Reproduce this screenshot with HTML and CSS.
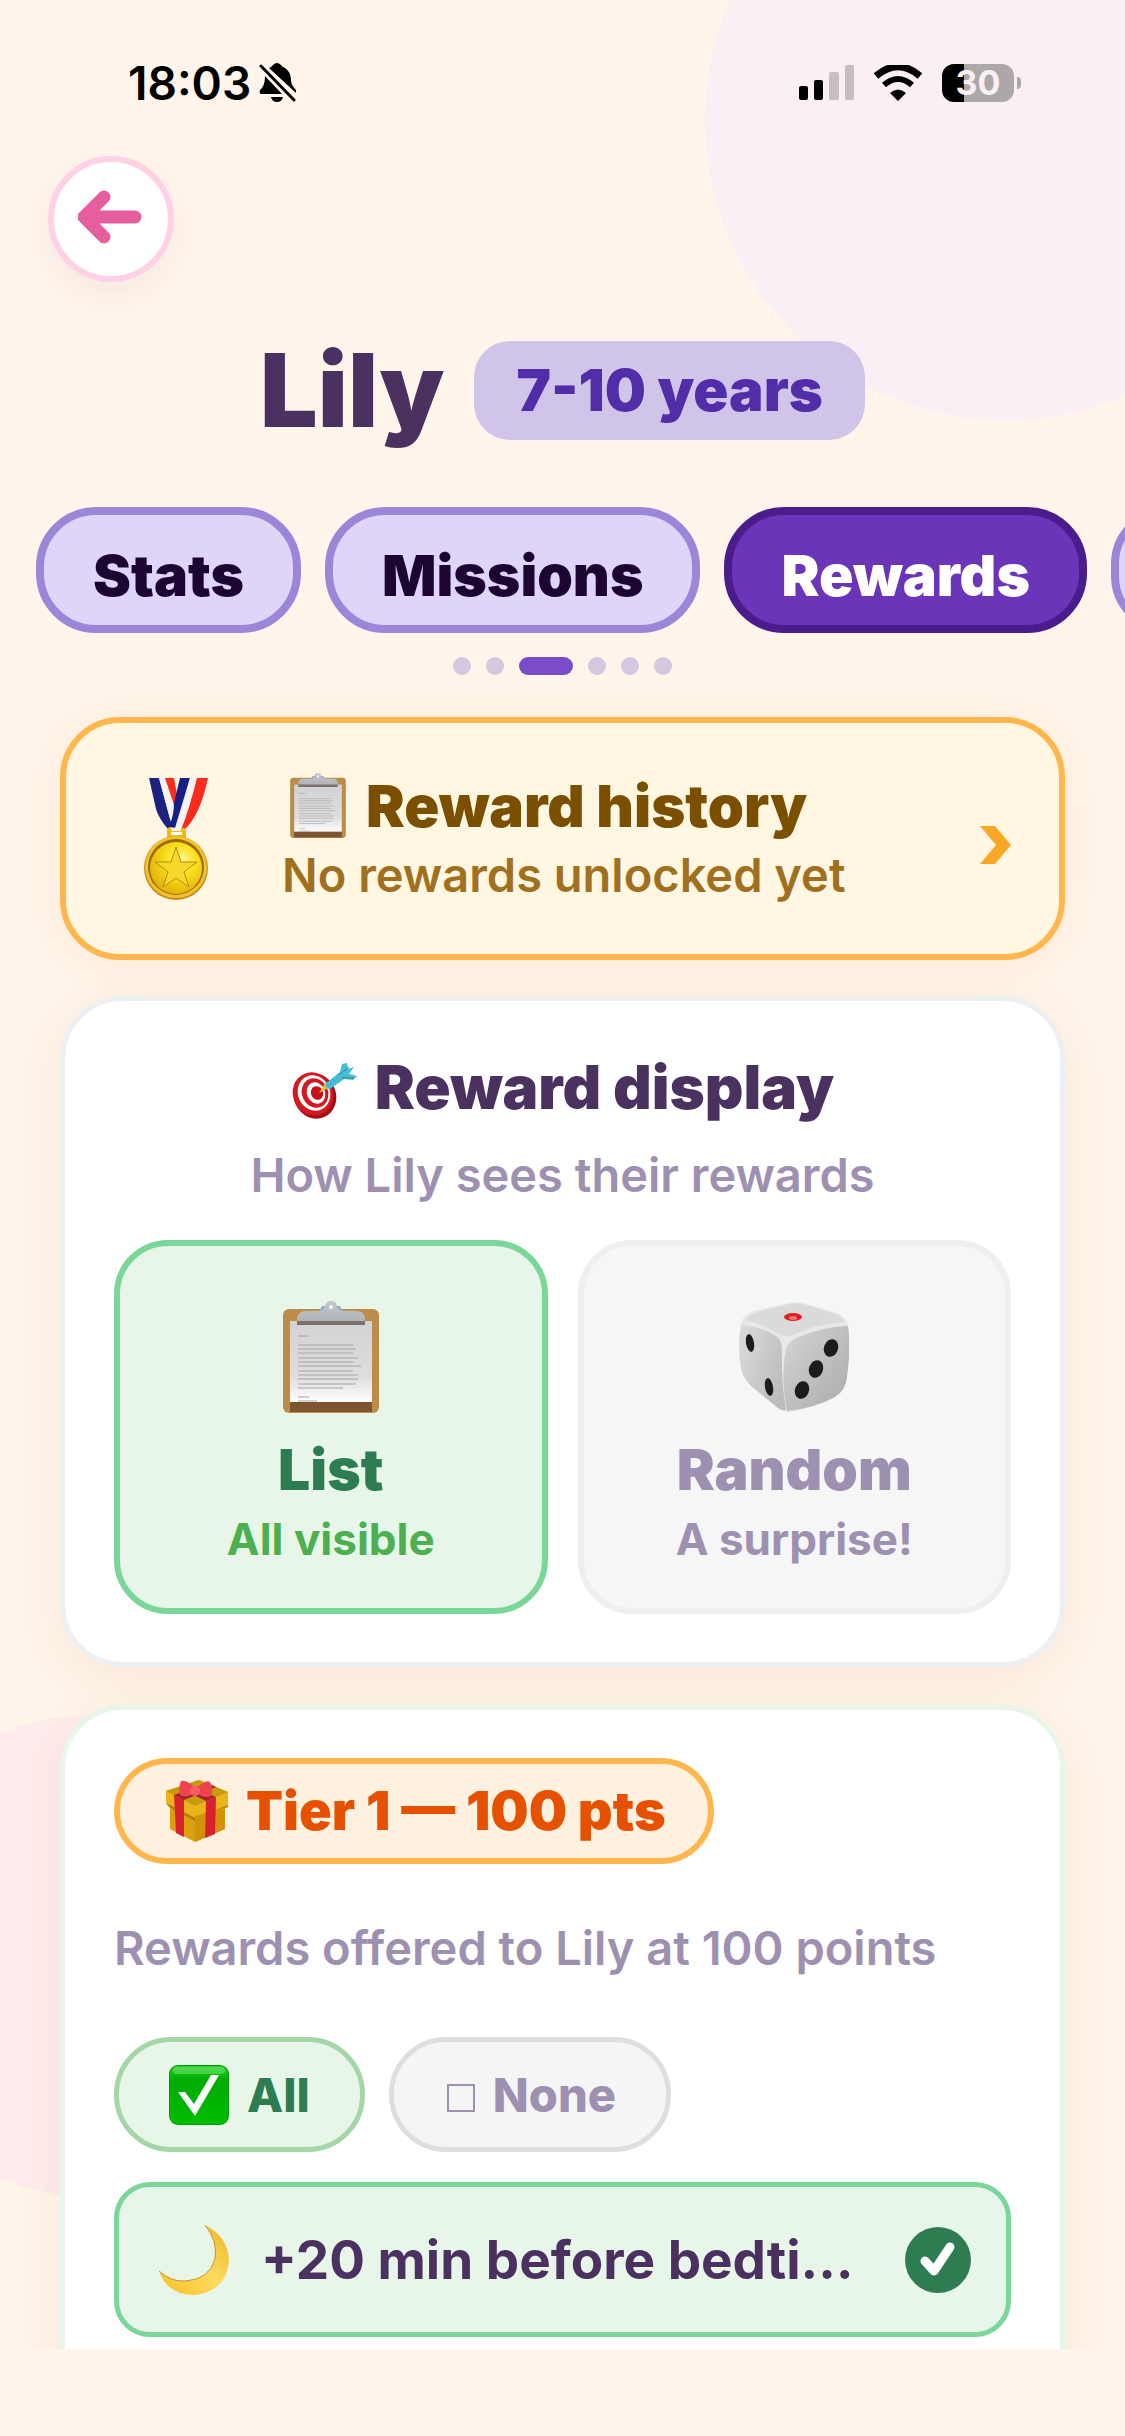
FILE: index.html
```html
<!DOCTYPE html>
<html lang="en">

<head>
    <meta charset="utf-8">
    <title>Lily - Rewards</title>
    <meta name="viewport" content="width=device-width, initial-scale=1">
    <link rel="stylesheet" href="styles.css">
</head>

<body>
    <!-- shared emoji drawings -->
    <svg class="defs" width="0" height="0" aria-hidden="true">
        <defs>
            <linearGradient id="paper" x1="0" y1="0" x2="0" y2="1">
                <stop offset="0" stop-color="#d2d2d4" />
                <stop offset="0.7" stop-color="#dededf" />
                <stop offset="1" stop-color="#ffffff" />
            </linearGradient>
            <linearGradient id="clip" x1="0" y1="0" x2="0" y2="1">
                <stop offset="0" stop-color="#c3c8cd" />
                <stop offset="1" stop-color="#aeb1b6" />
            </linearGradient>
            <symbol id="clipboard" viewBox="0 0 96 112">
                <rect x="0" y="8" width="96" height="104" rx="6" fill="#bd8c4a" />
                <rect x="7" y="100" width="82" height="11" fill="#7d5530" />
                <rect x="7" y="20" width="82" height="81" fill="url(#paper)" />
                <path d="M34 10q4-1 5-5h18q1 4 5 5z" fill="#8ea9cf" />
                <path d="M14 23v-6q1-7 9-7h14q4-1 5-5q1-5 6-5t6 5q1 4 5 5h14q8 0 9 7v6z" fill="url(#clip)" />
                <path d="M14 20h68v4H14z" fill="#7c726b" />
                <circle cx="48" cy="6" r="2" fill="#f5f5f5" />
                <path d="M15 35h11M15 44h55M15 48h58M15 52h55M15 57h60M15 61h56M15 65h63M15 70h55M15 74h60M15 78h60M15 83h58M15 87h45M15 96h11M15 100h19"
                    stroke="#a4a4a6" stroke-width="1" />
            </symbol>
        </defs>
    </svg>

    <div class="bubble bubble-purple"></div>
    <div class="bubble bubble-pink"></div>

    <div class="statusbar">
        <span class="time">18:03</span>
        <svg class="bell" viewBox="0 0 37 40">
            <path d="M10 5q3-1 4-3q2-2 4-2t4 2q1 2 4 3q6 4 6 12q0 5 5 10v3zM6 13l17 18H2q-2-1-1-4q5-4 5-14z" />
            <path d="M12 34h12q-1 5-6 5t-6-5z" />
            <path d="M2 3l33 34" stroke="#000" stroke-width="3" stroke-linecap="round" />
        </svg>
        <span class="spacer"></span>
        <svg class="signal" viewBox="0 0 56 36">
            <rect x="0" y="21" width="9" height="14" rx="2" />
            <rect x="15" y="15" width="9" height="20" rx="2" />
            <rect x="30" y="7" width="10" height="28" rx="2" fill="#c5bfc2" />
            <rect x="46" y="0" width="9" height="35" rx="2" fill="#c5bfc2" />
        </svg>
        <svg class="wifi" viewBox="0 0 50 36">
            <path d="M3 11Q25-8 47 11" fill="none" stroke="#000" stroke-width="7" />
            <path d="M11 20Q25 8 39 20" fill="none" stroke="#000" stroke-width="6" />
            <path d="M17 28Q25 21 33 28L25 36z" />
        </svg>
        <span class="battery">30</span>
        <span class="battery-cap"></span>
    </div>

    <button class="back" aria-label="Back">
        <svg viewBox="0 0 64 54">
            <path d="M57 27H7M26 7L6 27L26 47" />
        </svg>
    </button>

    <div class="profile">
        <h1>Lily</h1>
        <span class="age">7-10 years</span>
    </div>

    <nav class="tabs">
        <button class="tab">Stats</button>
        <button class="tab">Missions</button>
        <button class="tab active">Rewards</button>
        <button class="tab" aria-label="Next tab"></button>
    </nav>
    <div class="dots">
        <span></span><span></span><span class="on"></span><span></span><span></span><span></span>
    </div>

    <main class="content">
        <button class="history">
            <svg class="medal" viewBox="0 0 64 122">
                <defs>
                    <radialGradient id="gold" cx="0.6" cy="0.35" r="0.7">
                        <stop offset="0" stop-color="#fff9a0" />
                        <stop offset="0.4" stop-color="#fbe11c" />
                        <stop offset="1" stop-color="#dfae08" />
                    </radialGradient>
                </defs>
                <path d="M5 0h10l13 48-4 3q-9-10-12-20z" fill="#1b2280" />
                <path d="M15 0h7l8 27-4 14z" fill="#f4f3f2" />
                <path d="M21 0h9l3 16-3 11z" fill="#fb2b20" />
                <path d="M36 0h10L33 50l-8-1q5-12 5-24z" fill="#171f86" />
                <path d="M46 0h8L40 50h-9z" fill="#f4f3f4" />
                <path d="M53 0h11Q56 38 40 52h-3q8-20 16-52z" fill="#fb2b20" />
                <path d="M23 61v-9q1-4 4-2v3h10v-3q4-1 5 2v9z" fill="#efb71b" />
                <rect x="27" y="54" width="11" height="3" fill="#fff" />
                <circle cx="32" cy="90" r="32" fill="#c98a17" />
                <circle cx="32" cy="89" r="31" fill="#f2c22b" />
                <circle cx="32" cy="89" r="28" fill="#9c6a10" />
                <circle cx="32" cy="90" r="26" fill="url(#gold)" />
                <path d="M32 69l5 15h16L40 94l5 15-13-9-13 9 5-15-13-10h16z" fill="#f6d82c" stroke="#b78a10"
                    stroke-width="1" />
            </svg>
            <span class="history-text">
                <span class="history-title"><svg class="board-small"><use href="#clipboard" /></svg>Reward history</span>
                <span class="history-sub">No rewards unlocked yet</span>
            </span>
            <svg class="chevron" viewBox="0 0 31 38">
                <path d="M0 0H15L31 19L15 38H0L16 19z" />
            </svg>
        </button>

        <section class="card">
            <h2>
                <svg class="dart" viewBox="0 0 66 56">
                    <ellipse cx="24" cy="33" rx="21" ry="23" transform="rotate(-24 24 33)" fill="#9f0d16" />
                    <ellipse cx="22" cy="31" rx="20" ry="22" transform="rotate(-24 22 31)" fill="#d5171f" />
                    <ellipse cx="23" cy="30" rx="16" ry="18" transform="rotate(-24 23 30)" fill="#fff" />
                    <ellipse cx="24" cy="30" rx="13" ry="15" transform="rotate(-24 24 30)" fill="#d5171f" />
                    <ellipse cx="25" cy="30" rx="9" ry="11" transform="rotate(-24 25 30)" fill="#fff" />
                    <ellipse cx="26" cy="30" rx="6" ry="7" transform="rotate(-24 26 30)" fill="#c31019" />
                    <path d="M28 30l7-11 4 5z" fill="#e9c62c" />
                    <path d="M35 20L49 9l2-8 5-1 1 6 6-2-5 7 8 2-4 4-9-1-14 10q-5 0-4-6z" fill="#45bdd6" />
                    <path d="M48 12l10-8M51 15l12 0" stroke="#2489a0" stroke-width="1" />
                </svg>
                Reward display
            </h2>
            <p class="card-sub">How Lily sees their rewards</p>
            <div class="modes">
                <button class="mode selected">
                    <svg class="board-big"><use href="#clipboard" /></svg>
                    <span class="mode-name">List</span>
                    <span class="mode-info">All visible</span>
                </button>
                <button class="mode">
                    <svg class="dice" viewBox="0 0 110 110">
                        <defs>
                            <linearGradient id="left" x1="0" y1="0" x2="1" y2="0.6">
                                <stop offset="0" stop-color="#dcdcdc" />
                                <stop offset="1" stop-color="#bcbcbc" />
                            </linearGradient>
                            <linearGradient id="right" x1="0" y1="0" x2="1" y2="1">
                                <stop offset="0" stop-color="#d4d5d5" />
                                <stop offset="1" stop-color="#a9aaaa" />
                            </linearGradient>
                        </defs>
                        <path d="M2 21Q4 13 14 9L50 1Q58-1 68 2L98 11Q108 15 109 23Q112 46 108 75Q107 88 96 95Q76 106 52 110Q46 111 40 107L12 84Q4 76 2 66Q-2 44 2 21z" fill="#e8e8e8" />
                        <path d="M2 23Q22 24 37 34Q43 38 43 48Q42 78 47 108Q43 109 39 106L12 84Q4 76 2 66Q-2 44 2 23z" fill="url(#left)" />
                        <path d="M109 24Q86 24 57 36Q47 41 46 52Q42 80 48 109Q76 106 96 95Q107 88 108 75Q112 46 109 24z" fill="url(#right)" />
                        <path d="M6 18Q10 12 22 9L50 2Q58 0 68 3L96 12Q104 15 105 20Q74 23 53 33Q45 36 38 31Q24 22 6 18z" fill="#dadada" />
                        <ellipse cx="54" cy="15" rx="9" ry="4" fill="#e01f20" />
                        <ellipse cx="54" cy="16" rx="4" ry="2" fill="#f6716c" />
                        <g fill="#1c1c1c">
                            <ellipse cx="11" cy="41" rx="4" ry="9" transform="rotate(-10 11 41)" />
                            <ellipse cx="30" cy="85" rx="4" ry="9" transform="rotate(-10 30 85)" />
                            <ellipse cx="92" cy="46" rx="7" ry="9" transform="rotate(20 92 46)" />
                            <ellipse cx="77" cy="67" rx="7" ry="9" transform="rotate(20 77 67)" />
                            <ellipse cx="63" cy="88" rx="7" ry="9" transform="rotate(20 63 88)" />
                        </g>
                    </svg>
                    <span class="mode-name">Random</span>
                    <span class="mode-info">A surprise!</span>
                </button>
            </div>
        </section>

        <section class="card tier">
            <div class="tier-badge">
                <svg class="gift" viewBox="0 0 62 62">
                    <path d="M0 11L33 0L62 12V25L59 26V49L29 62L4 49V26L0 22z" fill="#dba010" />
                    <path d="M0 11L33 0L62 12L29 26z" fill="#c99a0c" />
                    <path d="M0 11L29 26V38L0 23zM62 12L29 26V38L62 25z" fill="#eab51a" />
                    <path d="M0 23L29 38L62 25V27L29 41L3 27z" fill="#b27b08" />
                    <path d="M29 36V62L59 49V27z" fill="#d19409" />
                    <path d="M8 15L18 20V57L10 53zM40 21L50 17L49 54L39 58z" fill="#d8202f" />
                    <path d="M8 15L42 3L50 7L18 20zM40 21L50 17L22 5L14 8z" fill="#a5212a" />
                    <path d="M29 8Q20-1 15 1Q12 8 14 15Q20 19 28 13zM31 8Q40-1 44 2Q48 8 45 16Q38 19 31 13z"
                        fill="#ee4450" />
                    <circle cx="29" cy="11" r="5" fill="#f65c64" />
                </svg>
                Tier 1 — 100 pts
            </div>
            <p class="tier-info">Rewards offered to Lily at 100 points</p>
            <div class="picks">
                <button class="pick all">
                    <svg class="tick" viewBox="0 0 60 60">
                        <defs>
                            <linearGradient id="green" x1="0" y1="0" x2="0" y2="1">
                                <stop offset="0" stop-color="#1fd01f" />
                                <stop offset="0.25" stop-color="#00ac00" />
                                <stop offset="1" stop-color="#00bd00" />
                            </linearGradient>
                        </defs>
                        <rect x="0" y="0" width="60" height="60" rx="9" fill="#0a9a12" />
                        <rect x="1" y="1" width="58" height="58" rx="8" fill="url(#green)" />
                        <rect x="4" y="2" width="52" height="7" rx="4" fill="#6be36b" opacity="0.6" />
                        <path d="M9 27H16L25 39L42 10H50L26 51z" fill="#fff" />
                    </svg>
                    All
                </button>
                <button class="pick none"><span class="square"></span>None</button>
            </div>
            <label class="reward" for="bedtime">
                <svg class="moon" viewBox="0 0 70 70">
                    <defs>
                        <linearGradient id="moonfill" x1="0" y1="1" x2="1" y2="0">
                            <stop offset="0" stop-color="#fbbc24" />
                            <stop offset="0.5" stop-color="#fbdc5e" />
                            <stop offset="1" stop-color="#efb52c" />
                        </linearGradient>
                    </defs>
                    <path d="M46 0Q70 12 70 37Q67 66 36 70Q8 70 0 46Q12 57 26 56Q50 55 56 34Q59 16 46 0z"
                        fill="url(#moonfill)" />
                    <path d="M0 46Q12 57 26 56Q50 55 56 34Q59 16 46 0" fill="none" stroke="#c8922a"
                        stroke-width="1" />
                </svg>
                <span class="reward-name">+20 min before bedti…</span>
                <span class="check">
                    <input type="checkbox" id="bedtime" checked>
                    <svg viewBox="0 0 66 66">
                        <path d="M20 34L29 44L45 20" />
                    </svg>
                </span>
            </label>
        </section>
    </main>
</body>

</html>
```
FILE: styles.css
```css
* {
    box-sizing: border-box;
}

body {
    margin: 0;
    height: 100vh;
    display: flex;
    flex-direction: column;
    position: relative;
    overflow: hidden;
    padding-bottom: 87px;
    background: #fff5eb;
    color: #4a3160;
    font-family: Inter, "Liberation Sans", sans-serif;
}

button {
    font-family: inherit;
    cursor: pointer;
}

h1,
h2,
p {
    margin: 0;
}

svg {
    display: block;
    flex: none;
}

.defs {
    position: absolute;
}

/* background circles */
.bubble {
    position: absolute;
    z-index: -1;
    border-radius: 50%;
}

.bubble-purple {
    width: 600px;
    height: 600px;
    top: -180px;
    right: -180px;
    background: #f9eff5;
}

.bubble-pink {
    width: 480px;
    height: 480px;
    left: -150px;
    bottom: 240px;
    background: #ffebec;
}

/* status bar */
.statusbar {
    display: flex;
    align-items: center;
    flex: none;
    height: 112px;
    padding: 54px 104px 0 128px;
    color: #000;
}

.time {
    font-size: 46px;
    font-weight: 600;
    line-height: 58px;
}

.bell {
    width: 37px;
    height: 40px;
    margin-left: 8px;
}

.spacer {
    flex: 1;
}

.signal {
    width: 56px;
    height: 36px;
}

.wifi {
    width: 50px;
    height: 36px;
    margin-left: 18px;
}

.battery {
    width: 72px;
    height: 38px;
    margin-left: 19px;
    border-radius: 12px;
    background: linear-gradient(to right, #000 30%, #aca8aa 30%);
    color: #f9eff5;
    font-size: 34px;
    font-weight: 700;
    line-height: 38px;
    text-align: center;
}

.battery-cap {
    width: 4px;
    height: 12px;
    margin-left: 3px;
    border-radius: 0 6px 6px 0;
    background: #aca8aa;
}

/* header */
.back {
    display: flex;
    align-items: center;
    justify-content: center;
    flex: none;
    width: 126px;
    height: 126px;
    margin: 44px 0 0 48px;
    padding: 0 2px 4px 0;
    border: 6px solid #ffd1e6;
    border-radius: 50%;
    background: #fff;
    box-shadow: 0 12px 30px rgba(74, 49, 96, 0.06);
}

.back svg {
    width: 64px;
    height: 54px;
    fill: none;
    stroke: #e55f9f;
    stroke-width: 13;
    stroke-linecap: round;
    stroke-linejoin: round;
}

.profile {
    display: flex;
    align-items: center;
    justify-content: center;
    gap: 30px;
    margin-top: 48px;
}

h1 {
    font-size: 102px;
    font-weight: 900;
    line-height: 120px;
}

.age {
    padding: 16px 42px;
    border-radius: 36px;
    background: #d1c4e9;
    color: #512da8;
    font-size: 58px;
    font-weight: 900;
    line-height: 67px;
}

.tabs {
    display: flex;
    flex: none;
    gap: 24px;
    margin-top: 57px;
    padding-left: 36px;
    overflow: hidden;
}

.tab {
    flex: none;
    height: 126px;
    padding: 11px 49px 0;
    border: 8px solid #9b86d8;
    border-radius: 60px;
    background: #ded5f9;
    color: #1c0533;
    font-size: 57px;
    font-weight: 900;
}

.tab.active {
    border-color: #4a1c8c;
    background: #6a35b8;
    color: #fff;
}

.dots {
    display: flex;
    justify-content: center;
    gap: 15px;
    margin-top: 24px;
}

.dots span {
    width: 18px;
    height: 18px;
    border-radius: 9px;
    background: #d3c8df;
}

.dots .on {
    width: 54px;
    background: #7a4cc9;
}

/* scrolling part */
.content {
    flex: 1;
    min-height: 0;
    overflow: hidden;
    display: flex;
    flex-direction: column;
    gap: 36px;
    padding: 42px 60px 0;
}

.history {
    display: flex;
    align-items: center;
    flex: none;
    height: 243px;
    padding: 0 48px 0 78px;
    border: 6px solid #ffb74d;
    border-radius: 60px;
    background: #fff7e1;
    text-align: left;
    box-shadow: 0 6px 42px rgba(255, 150, 50, 0.12);
}

.medal {
    width: 64px;
    height: 122px;
}

.history-text {
    flex: 1;
    display: flex;
    flex-direction: column;
    margin-left: 74px;
}

.history-title {
    display: flex;
    align-items: center;
    gap: 20px;
    padding-left: 8px;
    color: #7a4f00;
    font-size: 58px;
    font-weight: 900;
    line-height: 72px;
    white-space: nowrap;
}

.board-small {
    width: 56px;
    height: 65px;
}

.history-sub {
    color: #a07020;
    font-size: 47px;
    font-weight: 600;
    line-height: 66px;
}

.chevron {
    width: 31px;
    height: 38px;
    margin-top: 12px;
    fill: #f9a825;
}

.card {
    flex: none;
    padding: 48px 49px;
    border: 5px solid #eeeff0;
    border-radius: 63px;
    background: #fff;
    box-shadow: 0 12px 48px rgba(190, 110, 50, 0.1);
}

h2 {
    display: flex;
    align-items: center;
    justify-content: center;
    gap: 18px;
    font-size: 60px;
    font-weight: 900;
    line-height: 76px;
}

.dart {
    width: 66px;
    height: 56px;
    margin-top: 8px;
}

.card-sub {
    margin-top: 20px;
    color: #9e90b0;
    font-size: 47px;
    font-weight: 600;
    line-height: 60px;
    text-align: center;
}

.modes {
    display: grid;
    grid-template-columns: 1fr 1fr;
    gap: 30px;
    margin-top: 35px;
}

.mode {
    display: flex;
    flex-direction: column;
    align-items: center;
    height: 374px;
    padding: 55px 0 0;
    border: 6px solid #efefef;
    border-radius: 54px;
    background: #f6f6f6;
    color: #9e90b0;
}

.mode.selected {
    border-color: #7bd699;
    background: #e8f5e9;
    color: #2e7d52;
}

.board-big {
    width: 96px;
    height: 112px;
}

.dice {
    width: 110px;
    height: 112px;
}

.mode-name {
    margin-top: 24px;
    font-size: 57px;
    font-weight: 900;
    line-height: 66px;
}

.mode-info {
    margin-top: 8px;
    font-size: 44px;
    font-weight: 700;
    line-height: 56px;
}

.selected .mode-info {
    color: #4caf50;
}

/* tier */
.tier {
    margin-top: 2px;
    padding-bottom: 150px;
    border-color: #e8f5e9;
}

.tier-badge {
    display: flex;
    align-items: center;
    gap: 18px;
    width: fit-content;
    padding: 0 42px 0 46px;
    border: 6px solid #ffb74d;
    border-radius: 53px;
    background: #fff1e0;
    color: #e65100;
    font-size: 54px;
    font-weight: 900;
    line-height: 94px;
}

.gift {
    width: 62px;
    height: 62px;
}

.tier-info {
    margin-top: 54px;
    color: #9e90b0;
    font-size: 47px;
    font-weight: 600;
    line-height: 60px;
    white-space: nowrap;
}

.picks {
    display: flex;
    gap: 24px;
    margin-top: 59px;
}

.pick {
    display: flex;
    align-items: center;
    gap: 18px;
    height: 115px;
    padding: 0 50px;
    border: 5px solid #a5d6a7;
    border-radius: 57px;
    background: #e8f5e9;
    color: #2e7d52;
    font-size: 47px;
    font-weight: 800;
}

.pick.none {
    padding-left: 53px;
    border-color: #dedede;
    background: #f5f5f5;
    color: #9e90b0;
}

.tick {
    width: 60px;
    height: 60px;
}

.square {
    width: 28px;
    height: 28px;
    margin-top: 6px;
    border: 2px solid #9e90b0;
}

.reward {
    display: flex;
    align-items: center;
    height: 155px;
    margin-top: 30px;
    padding: 0 35px 0 40px;
    border: 5px solid #7bd699;
    border-radius: 36px;
    background: #e8f5e9;
}

.moon {
    width: 70px;
    height: 70px;
}

.reward-name {
    flex: 1;
    margin-left: 32px;
    font-size: 53px;
    font-weight: 700;
    white-space: nowrap;
}

.check {
    display: grid;
    width: 66px;
    height: 66px;
}

.check input,
.check svg {
    grid-area: 1 / 1;
    width: 66px;
    height: 66px;
    margin: 0;
}

.check input {
    appearance: none;
    border-radius: 50%;
    background: #2e7d52;
}

.check svg {
    z-index: 1;
    pointer-events: none;
    fill: none;
    stroke: #fff;
    stroke-width: 9;
    stroke-linecap: round;
    stroke-linejoin: round;
}
```
